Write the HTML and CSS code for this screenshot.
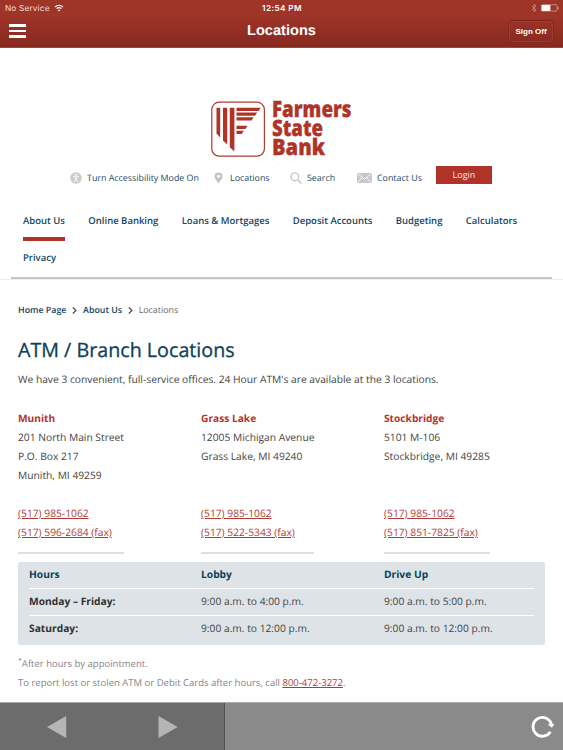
FILE: index.html
```html
<!DOCTYPE html>
<html lang="en">
<head>
  <meta charset="UTF-8">
  <meta name="viewport" content="width=device-width, initial-scale=1.0">
  <title>Locations</title>
  <link rel="stylesheet" href="styles.css">
</head>
<body>
  <!-- App header -->
  <header class="app-header">
    <div class="status-bar">
      <div class="carrier">
        No Service
        <svg class="wifi" viewBox="0 0 10 8" width="10" height="8">
          <path d="M1 3 Q5 -0.5 9 3 M2.6 4.7 Q5 2.6 7.4 4.7" fill="none" stroke="#fff" stroke-width="1.1"/>
          <path d="M3.8 6 Q5 5 6.2 6 L5 7.4Z" fill="#fff"/>
        </svg>
      </div>
      <div class="clock">12:54 PM</div>
      <div class="device">
        <svg viewBox="0 0 6 10" width="6" height="10">
          <path d="M0.8 2.8 L5 7 L3 9 V1 L5 3 L0.8 7.2" fill="none" stroke="#c98a82" stroke-width="0.8"/>
        </svg>
        <svg viewBox="0 0 18 8" width="18" height="8">
          <rect x="0.4" y="0.7" width="15.6" height="6.4" rx="1" fill="none" stroke="#d9a9a3" stroke-width="0.7"/>
          <rect x="0.6" y="1" width="8.8" height="5.9" fill="#fff"/>
          <path d="M16.8 2.7 Q18.2 4 16.8 5.3Z" fill="#fff"/>
        </svg>
      </div>
    </div>
    <div class="title-bar">
      <button class="menu-btn" aria-label="Menu"><span></span><span></span><span></span></button>
      <h1 class="app-title">Locations</h1>
      <button class="sign-off">Sign Off</button>
    </div>
  </header>

  <!-- Bank site header -->
  <div class="site-header">
    <svg class="logo" viewBox="0 0 146 66" width="146" height="66">
      <rect x="1.8" y="7.2" width="52.6" height="54" rx="7.5" fill="#fff" stroke="#b03a30" stroke-width="1.2"/>
      <g fill="#b03328">
        <path d="M6.5 12.8h3.7v29.8l-3.7-4z"/>
        <path d="M13 12.8h4.2v36.8l-4.2-4z"/>
        <path d="M19.8 12.8h4.6v43.6l-4.6-4.2z"/>
        <path d="M26.5 12.8h24.2l-2.2 3.2h-22z"/>
        <path d="M26.5 17.6h20.7l-2.2 3.2h-18.5z"/>
        <path d="M26.5 22.3h17.2l-2.2 3.2h-15z"/>
        <path d="M26.5 30.8h11l-2.2 3.2h-8.8z"/>
        <path d="M26.5 35.7h7.5l-2.4 3.2h-5.1z"/>
      </g>
      <g class="logo-text">
        <text x="62" y="21.8" textLength="79.5" lengthAdjust="spacingAndGlyphs">Farmers</text>
        <text x="62" y="41" textLength="51" lengthAdjust="spacingAndGlyphs">State</text>
        <text x="62" y="60.4" textLength="53" lengthAdjust="spacingAndGlyphs">Bank</text>
      </g>
    </svg>

    <div class="tools">
      <a class="tool access" href="#">
        <svg viewBox="0 0 12 12" width="12" height="12">
          <circle cx="6" cy="6" r="5.8" fill="#ccc"/>
          <circle cx="6" cy="2.8" r="1" fill="#fff"/>
          <path d="M3 4.5 L6 4.9 L9 4.5 M6 4.8 V7 M4.5 10 L5.5 6.5 H6.5 L7.5 10" fill="none" stroke="#fff" stroke-width="0.9"/>
        </svg>
        Turn Accessibility Mode On
      </a>
      <a class="tool place" href="#">
        <svg viewBox="0 0 9 12" width="9" height="12">
          <path d="M4.5 0.4 A4 4 0 0 0 0.5 4.4 C0.5 7 3.2 8.6 4.5 11.8 C5.8 8.6 8.5 7 8.5 4.4 A4 4 0 0 0 4.5 0.4Z" fill="#c4c4c4"/>
          <circle cx="4.5" cy="4.3" r="1.5" fill="#fff"/>
        </svg>
        Locations
      </a>
      <a class="tool search" href="#">
        <svg viewBox="0 0 12 12" width="12" height="12">
          <circle cx="4.8" cy="4.8" r="3.9" fill="none" stroke="#c8c8c8" stroke-width="1.4"/>
          <path d="M7.8 7.8 L11.3 11.3" stroke="#c8c8c8" stroke-width="1.7"/>
        </svg>
        Search
      </a>
      <a class="tool contact" href="#">
        <svg viewBox="0 0 15 10" width="15" height="10">
          <rect width="15" height="10" fill="#c8c8c8"/>
          <path d="M0.5 0.6 L7.5 6.2 L14.5 0.6 M0.5 9.6 L5.4 4.6 M14.5 9.6 L9.6 4.6" fill="none" stroke="#fff" stroke-width="0.9"/>
        </svg>
        Contact Us
      </a>
      <a class="login" href="#">Login</a>
    </div>

    <nav class="main-nav">
      <a class="active" href="#">About Us</a>
      <a href="#">Online Banking</a>
      <a href="#">Loans &amp; Mortgages</a>
      <a href="#">Deposit Accounts</a>
      <a href="#">Budgeting</a>
      <a href="#">Calculators</a>
      <a href="#">Privacy</a>
    </nav>
  </div>

  <!-- Page content -->
  <main class="content">
    <div class="breadcrumb">
      <a href="#">Home Page</a>
      <svg viewBox="0 0 5 7" width="5" height="7"><path d="M0.8 0.5 L4 3.5 L0.8 6.5" fill="none" stroke="#444" stroke-width="1.1"/></svg>
      <a href="#">About Us</a>
      <svg viewBox="0 0 5 7" width="5" height="7"><path d="M0.8 0.5 L4 3.5 L0.8 6.5" fill="none" stroke="#444" stroke-width="1.1"/></svg>
      <span>Locations</span>
    </div>

    <h2>ATM / Branch Locations</h2>
    <p class="intro">We have 3 convenient, full-service offices. 24 Hour ATM's are available at the 3 locations.</p>

    <div class="branches">
      <div class="branch">
        <h3>Munith</h3>
        <p class="address">201 North Main Street<br>P.O. Box 217<br>Munith, MI 49259</p>
        <p><a href="#">(517) 985-1062</a><br><a href="#">(517) 596-2684 (fax)</a></p>
      </div>
      <div class="branch wide">
        <h3>Grass Lake</h3>
        <p class="address">12005 Michigan Avenue<br>Grass Lake, MI 49240</p>
        <p><a href="#">(517) 985-1062</a><br><a href="#">(517) 522-5343 (fax)</a></p>
      </div>
      <div class="branch">
        <h3>Stockbridge</h3>
        <p class="address">5101 M-106<br>Stockbridge, MI 49285</p>
        <p><a href="#">(517) 985-1062</a><br><a href="#">(517) 851-7825 (fax)</a></p>
      </div>
    </div>

    <div class="hours">
      <div class="row head"><b>Hours</b><b>Lobby</b><b>Drive Up</b></div>
      <div class="row"><b>Monday – Friday:</b><span>9:00 a.m. to 4:00 p.m.</span><span>9:00 a.m. to 5:00 p.m.</span></div>
      <div class="row"><b>Saturday:</b><span>9:00 a.m. to 12:00 p.m.</span><span>9:00 a.m. to 12:00 p.m.</span></div>
    </div>

    <div class="notes">
      <p><sup>*</sup>After hours by appointment.</p>
      <p>To report lost or stolen ATM or Debit Cards after hours, call <a href="#">800-472-3272</a>.</p>
    </div>
  </main>

  <!-- Browser controls -->
  <footer class="toolbar">
    <div class="history">
      <svg viewBox="0 0 20 24" width="20" height="24"><path d="M19.2 1 V23 L0 12Z" fill="#b5b5b5"/></svg>
      <svg viewBox="0 0 20 24" width="20" height="24"><path d="M0.5 1 V23 L19.7 12Z" fill="#b5b5b5"/></svg>
    </div>
    <svg class="reload" viewBox="0 0 24 24" width="24" height="24">
      <path d="M19.4 16.8 A9.4 9.4 0 1 1 20.4 9" fill="none" stroke="#fff" stroke-width="2.8"/>
      <path d="M16.6 9.6 L23.4 8.8 L21 12.8Z" fill="#fff"/>
    </svg>
  </footer>
</body>
</html>
```

FILE: styles.css
```css
* {
  box-sizing: border-box;
}
body {
  margin: 0;
  width: 563px;
  height: 750px;
  overflow: hidden;
  display: flex;
  flex-direction: column;
  background: #fff;
  color: #444;
  font-family: "Open Sans", sans-serif;
  font-size: 10.25px;
  text-rendering: geometricPrecision;
}
h1, h2, h3, p {
  margin: 0;
}
a {
  color: #b03a35;
}
svg {
  display: block;
  flex: none;
}

/* App header */
.app-header {
  height: 48px;
  flex: none;
  background: linear-gradient(#9f3529 30%, #87281f);
  border-bottom: 1px solid #8b4d48;
  color: #fff;
  font-family: Inter, "Liberation Sans", sans-serif;
}
.status-bar {
  height: 16px;
  padding: 0 4px 0 5px;
  display: grid;
  grid-template-columns: 1fr auto 1fr;
  align-items: center;
  font-size: 8.2px;
}
.carrier {
  display: flex;
  align-items: center;
  gap: 4px;
  color: #f3dedb;
  letter-spacing: 0.2px;
}
.clock {
  font-weight: 600;
  letter-spacing: 0.4px;
}
.device {
  display: flex;
  justify-content: flex-end;
  align-items: center;
  gap: 4px;
}
.title-bar {
  height: 31px;
  padding: 0 9px;
  display: grid;
  grid-template-columns: 1fr auto 1fr;
  align-items: center;
}
.menu-btn {
  width: 17px;
  padding: 0;
  margin-bottom: 1px;
  border: 0;
  background: none;
  display: flex;
  flex-direction: column;
  gap: 3px;
}
.menu-btn span {
  height: 2.4px;
  background: #fff;
}
.app-title {
  font-family: "Liberation Sans", sans-serif;
  font-size: 14.6px;
  line-height: 31px;
}
.sign-off {
  justify-self: end;
  width: 46px;
  height: 23px;
  padding: 0;
  margin-bottom: 1px;
  border: 1px solid #82261d;
  border-radius: 4px;
  box-shadow: inset 0 0 0 1px #a03b31;
  background: none;
  color: #fff;
  font: bold 8px "Liberation Sans", sans-serif;
}

/* Bank site header */
.site-header {
  height: 232px;
  flex: none;
  padding-top: 47px;
  border-bottom: 1px solid #eee;
}
.logo {
  margin-left: 210px;
  overflow: visible;
}
.logo-text {
  font-family: "Open Sans", sans-serif;
  font-weight: 800;
  font-size: 22.6px;
  fill: #b03328;
  stroke: #b03328;
  stroke-width: 0.3px;
}
.tools {
  height: 19px;
  margin-top: 5px;
  padding-left: 70px;
  display: flex;
}
.tool {
  height: 23px;
  display: flex;
  align-items: center;
  gap: 5px;
  color: #1d4a63;
  font-size: 8.9px;
  text-decoration: none;
  white-space: nowrap;
}
.access {
  width: 144px;
}
.place {
  width: 76px;
  gap: 7px;
}
.search {
  width: 67px;
}
.contact {
  width: 79px;
}
.login {
  width: 56px;
  height: 18px;
  background: #b03228;
  color: #fbe6e4;
  font-size: 9px;
  line-height: 18px;
  text-align: center;
  text-decoration: none;
}
.main-nav {
  height: 85px;
  margin: 9px 11px 0;
  padding: 18px 12px 0;
  display: flex;
  flex-wrap: wrap;
  align-content: flex-start;
  column-gap: 23.4px;
  border-bottom: 2px solid #c5c5c5;
}
.main-nav a {
  height: 36.5px;
  color: #164560;
  font-size: 9.5px;
  font-weight: 600;
  line-height: 18px;
  text-decoration: none;
  white-space: nowrap;
}
.main-nav .active::after {
  content: "";
  display: block;
  height: 4px;
  margin-top: 7px;
  background: #b03228;
}

/* Page content */
.content {
  flex: 1;
  padding: 20px 18px 0;
}
.breadcrumb {
  height: 20px;
  display: flex;
  align-items: center;
  gap: 5.8px;
  font-size: 8.85px;
}
.breadcrumb a {
  color: #164560;
  font-weight: 600;
  text-decoration: none;
}
.breadcrumb span {
  color: #666;
}
h2 {
  margin-top: 14px;
  color: #0d4059;
  font-size: 19.7px;
  font-weight: 500;
  line-height: 32px;
  -webkit-text-stroke: 0.3px #0d4059;
}
.intro {
  margin-top: 5px;
  line-height: 19px;
}
.branches {
  height: 145px;
  margin-top: 19px;
  display: grid;
  grid-template-columns: 183px 183px 1fr;
  line-height: 19px;
}
.branch {
  width: 106px;
  border-bottom: 2px solid #e0e0e0;
  white-space: nowrap;
}
.branch.wide {
  width: 113px;
}
.branch h3 {
  color: #b5332b;
  font-size: 10.2px;
  line-height: 19px;
  margin-bottom: 1px;
}
.address {
  height: 76px;
}
.hours {
  width: 527px;
  height: 83px;
  margin-top: 8px;
  padding: 0 11px;
  border-radius: 2px;
  background: #dde3e7;
}
.row {
  height: 27px;
  display: grid;
  grid-template-columns: 172px 183px 1fr;
  line-height: 27px;
  border-bottom: 1px solid #fff;
}
.row b {
  color: #303030;
}
.row:last-child {
  border: 0;
}
.row.head b {
  color: #0d4059;
}
.notes {
  margin-top: 9px;
  color: #858585;
  font-size: 9.52px;
  line-height: 19px;
}
.notes sup {
  font-size: 7px;
  line-height: 0;
}

/* Browser controls */
.toolbar {
  height: 48px;
  flex: none;
  display: flex;
  align-items: center;
  justify-content: space-between;
  border-top: 1px solid #aaa;
  background: #8a8a8a;
}
.history {
  width: 225px;
  height: 47px;
  padding-left: 47px;
  display: flex;
  align-items: center;
  gap: 91px;
  background: #6c6c6c;
  border-right: 1px solid #505050;
}
.reload {
  margin-right: 8px;
}
```
